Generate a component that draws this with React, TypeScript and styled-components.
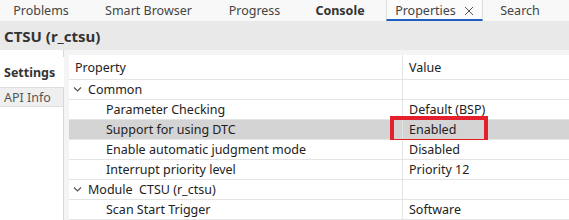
import React from "react";
import styled, { createGlobalStyle } from "styled-components";

const Global = createGlobalStyle`
  html, body { margin: 0; padding: 0; background: #ffffff; }
  body { font-family: "Noto Sans", "Noto Sans CJK SC", sans-serif; color: #222; }
  * { box-sizing: border-box; }
`;

const Page = styled.div`
  width: 569px;
  height: 220px;
  overflow: hidden;
  display: flex;
  flex-direction: column;
  background: #fff;
`;

const TabBar = styled.div`
  height: 21px;
  display: flex;
  align-items: stretch;
  background: #f8f8f8;
  flex-shrink: 0;
`;

const Tab = styled.div<{ $w: number; $bold?: boolean; $active?: boolean }>`
  width: ${(p) => p.$w}px;
  flex-shrink: 0;
  display: flex;
  align-items: center;
  justify-content: center;
  gap: 8px;
  font-size: 12.5px;
  font-weight: ${(p) => (p.$bold ? 700 : 400)};
  color: ${(p) => (p.$bold ? "#333" : "#444")};
  background: ${(p) => (p.$active ? "#fbfbfb" : "transparent")};
  border-left: ${(p) => (p.$active ? "1px solid #dcdcdc" : "none")};
  border-right: ${(p) => (p.$active ? "1px solid #dcdcdc" : "none")};
  border-bottom: ${(p) => (p.$active ? "2px solid #1f5fbf" : "none")};
  padding-top: ${(p) => (p.$active ? "2px" : "0")};
`;

const Header = styled.div`
  height: 29px;
  flex-shrink: 0;
  background: #e9e9e9;
  display: flex;
  align-items: center;
  padding-left: 4px;
  font-size: 15px;
  font-weight: 700;
  color: #333;
`;

const Body = styled.div`
  flex: 1;
  display: flex;
  background: #f4f4f4;
`;

const Sidebar = styled.div`
  width: 64px;
  flex-shrink: 0;
  background: #fff;
  border-right: 1px solid #d8d8d8;
  padding-top: 7px;
  display: flex;
  flex-direction: column;
`;

const SideTab = styled.div<{ $active?: boolean }>`
  height: ${(p) => (p.$active ? 30 : 20)}px;
  display: flex;
  align-items: center;
  padding-left: 4px;
  font-size: 12.5px;
  font-weight: ${(p) => (p.$active ? 700 : 400)};
  color: ${(p) => (p.$active ? "#333" : "#555")};
  background: ${(p) => (p.$active ? "#fff" : "#efefef")};
  border-top: ${(p) => (p.$active ? "none" : "1px solid #dedede")};
  border-bottom: ${(p) => (p.$active ? "none" : "1px solid #dedede")};
  margin-right: ${(p) => (p.$active ? "-1px" : "0")};
`;

const TableWrap = styled.div`
  flex: 1;
  padding: 5px 0 0 5px;
`;

const Table = styled.div`
  background: #fff;
  height: 100%;
  display: grid;
  grid-template-columns: 333px 1fr;
  grid-template-rows: 25px;
  grid-auto-rows: 20px;
  align-content: start;
`;

const Cell = styled.div<{ $indent?: number; $hl?: boolean; $right?: boolean }>`
  display: flex;
  align-items: center;
  padding-left: ${(p) => p.$indent ?? 6}px;
  font-size: 12.5px;
  color: #222;
  white-space: pre;
  position: relative;
  background: ${(p) => (p.$hl ? "#d4d4d4" : "#fff")};
  border-bottom: 1px solid #e4e4e4;
  border-left: ${(p) => (p.$right ? "1px solid #e4e4e4" : "none")};
`;

const Row = styled.div`
  display: contents;
`;

const Chevron = styled.svg`
  width: 9px;
  height: 9px;
  margin-right: 6px;
  flex-shrink: 0;
`;

const RedBox = styled.div`
  position: absolute;
  left: -13px;
  top: -4px;
  width: 98px;
  height: 27px;
  border: 4px solid #e3202b;
  pointer-events: none;
`;

const CloseIcon = styled.svg`
  width: 10px;
  height: 10px;
`;

const Down = () => (
  <Chevron viewBox="0 0 9 9">
    <path d="M1 2.5 L4.5 6 L8 2.5" fill="none" stroke="#555" strokeWidth="1.2" />
  </Chevron>
);

type RowData = { name: string; value?: string; group?: boolean; hl?: boolean; boxed?: boolean };

const rows: RowData[] = [
  { name: "Common", group: true },
  { name: "Parameter Checking", value: "Default (BSP)" },
  { name: "Support for using DTC", value: "Enabled", hl: true, boxed: true },
  { name: "Enable automatic judgment mode", value: "Disabled" },
  { name: "Interrupt priority level", value: "Priority 12" },
  { name: "Module  CTSU (r_ctsu)", group: true },
  { name: "Scan Start Trigger", value: "Software" },
];

export default function App() {
  return (
    <Page>
      <Global />
      <TabBar>
        <Tab $w={82}>Problems</Tab>
        <Tab $w={133}>Smart Browser</Tab>
        <Tab $w={79}>Progress</Tab>
        <Tab $w={92} $bold>Console</Tab>
        <Tab $w={97} $active>
          Properties
          <CloseIcon viewBox="0 0 10 10">
            <path d="M1 1 L9 9 M9 1 L1 9" stroke="#555" strokeWidth="1" />
          </CloseIcon>
        </Tab>
        <Tab $w={74}>Search</Tab>
      </TabBar>
      <Header>CTSU (r_ctsu)</Header>
      <Body>
        <Sidebar>
          <SideTab $active>Settings</SideTab>
          <SideTab>API Info</SideTab>
        </Sidebar>
        <TableWrap>
          <Table>
            <Row>
              <Cell>Property</Cell>
              <Cell $right>Value</Cell>
            </Row>
            {rows.map((r) => (
              <Row key={r.name}>
                <Cell $hl={r.hl} $indent={r.group ? 4 : 37}>
                  {r.group && <Down />}
                  {r.name}
                </Cell>
                <Cell $hl={r.hl} $right>
                  {r.value}
                  {r.boxed && <RedBox />}
                </Cell>
              </Row>
            ))}
          </Table>
        </TableWrap>
      </Body>
    </Page>
  );
}
